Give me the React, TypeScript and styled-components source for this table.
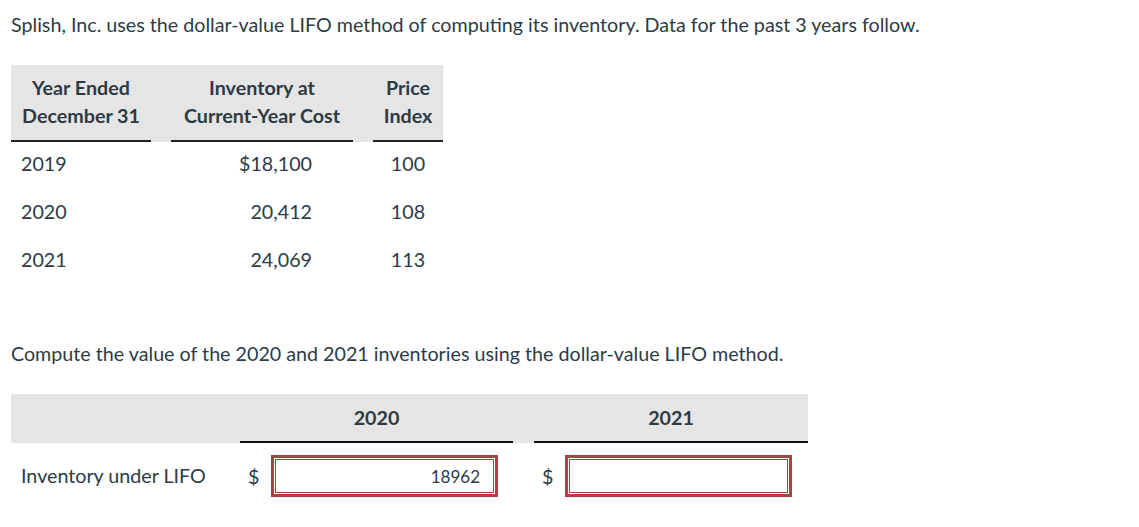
import React from 'react';
import styled, { createGlobalStyle } from 'styled-components';

const GlobalStyle = createGlobalStyle`
  body {
    margin: 0;
    background: #fff;
    font-family: Lato, "Open Sans", sans-serif;
    color: #2d3b45;
  }
`;

const Page = styled.div`
  padding: 11px;
`;

const Intro = styled.p`
  margin: 0;
  font-size: 19.7px;
  line-height: 27px;
`;

const DataTable = styled.div`
  display: grid;
  grid-template-columns: 140px 182px 70px;
  column-gap: 20px;
  width: 433px;
  margin-top: 27px;
`;

const HeadBand = styled.div`
  grid-column: 1 / -1;
  display: grid;
  grid-template-columns: subgrid;
  background: #e5e5e5;
`;

const HeadCell = styled.div<{ $align?: 'left' | 'center' }>`
  padding: 9px 0 10px;
  font-size: 19.7px;
  line-height: 28px;
  font-weight: 700;
  text-align: ${p => p.$align ?? 'center'};
  border-bottom: 2px solid #222;
  white-space: nowrap;
`;

const Cell = styled.div<{ $align?: 'left' | 'center' | 'right'; $padRight?: number }>`
  padding: 8px ${p => p.$padRight ?? 10}px 12px 10px;
  font-size: 19.7px;
  line-height: 28px;
  text-align: ${p => p.$align ?? 'left'};
`;

const Prompt = styled(Intro)`
  margin-top: 54px;
`;

const AnswerTable = styled.div`
  display: grid;
  grid-template-columns: 229px 273px 295px;
  width: 797px;
  margin-top: 27px;
`;

const AnswerHead = styled.div`
  grid-column: 1 / -1;
  display: grid;
  grid-template-columns: subgrid;
  background: #e5e5e5;
  height: 49px;
`;

const YearHead = styled.div<{ $offset?: number }>`
  display: flex;
  align-items: center;
  justify-content: center;
  margin-left: ${p => p.$offset ?? 0}px;
  font-size: 19.7px;
  font-weight: 700;
  border-bottom: 2px solid #111;
`;

const RowLabel = styled.div`
  display: flex;
  align-items: center;
  padding: 11px 10px 0;
  height: 42px;
  font-size: 19.7px;
`;

const AnswerCell = styled.div<{ $offset?: number }>`
  display: flex;
  align-items: center;
  gap: 11px;
  padding: 12px 0 0 8px;
  margin-left: ${p => p.$offset ?? 0}px;
`;

const Dollar = styled.span`
  font-size: 19.7px;
  width: 12px;
`;

const InputFrame = styled.div`
  box-sizing: border-box;
  width: 227px;
  height: 42px;
  border: 3px solid #b0413e;
  padding: 1px;
  background: #fff;
`;

const AnswerInput = styled.input`
  box-sizing: border-box;
  width: 100%;
  height: 100%;
  border: 1px solid #b0413e;
  outline: none;
  padding: 0 13px;
  font-family: Lato, "Open Sans", sans-serif;
  font-size: 17px;
  color: #2d3b45;
  text-align: right;
  background: #fff;
`;

const rows = [
  { year: '2019', cost: '$18,100', index: '100' },
  { year: '2020', cost: '20,412', index: '108' },
  { year: '2021', cost: '24,069', index: '113' },
];

const App: React.FC = () => {
  return (
    <Page>
      <GlobalStyle />
      <Intro>
        Splish, Inc. uses the dollar-value LIFO method of computing its inventory. Data for the past 3 years follow.
      </Intro>

      <DataTable>
        <HeadBand>
          <HeadCell>Year Ended<br />December 31</HeadCell>
          <HeadCell>Inventory at<br />Current-Year Cost</HeadCell>
          <HeadCell>Price<br />Index</HeadCell>
        </HeadBand>
        {rows.map(r => (
          <React.Fragment key={r.year}>
            <Cell>{r.year}</Cell>
            <Cell $align="right" $padRight={41}>{r.cost}</Cell>
            <Cell $align="center">{r.index}</Cell>
          </React.Fragment>
        ))}
      </DataTable>

      <Prompt>Compute the value of the 2020 and 2021 inventories using the dollar-value LIFO method.</Prompt>

      <AnswerTable>
        <AnswerHead>
          <div />
          <YearHead>2020</YearHead>
          <YearHead $offset={21}>2021</YearHead>
        </AnswerHead>
        <RowLabel>Inventory under LIFO</RowLabel>
        <AnswerCell>
          <Dollar>$</Dollar>
          <InputFrame>
            <AnswerInput defaultValue="18962" />
          </InputFrame>
        </AnswerCell>
        <AnswerCell $offset={21}>
          <Dollar>$</Dollar>
          <InputFrame>
            <AnswerInput defaultValue="" />
          </InputFrame>
        </AnswerCell>
      </AnswerTable>
    </Page>
  );
};

export default App;
